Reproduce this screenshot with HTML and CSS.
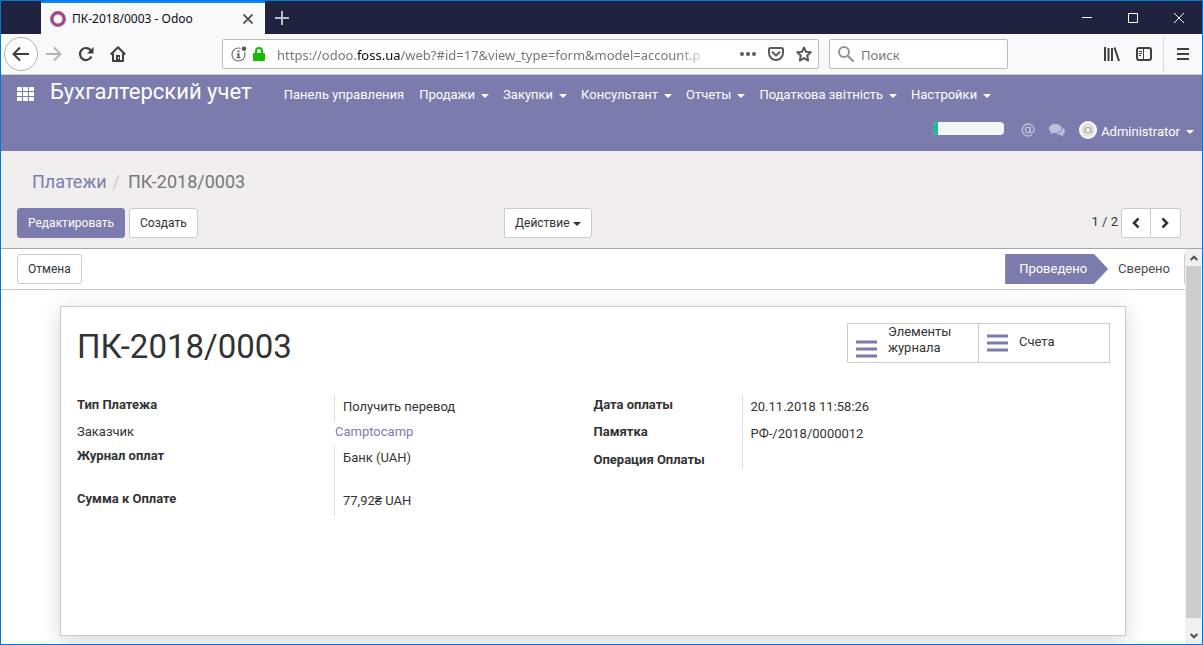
FILE: index.html
```html
<!DOCTYPE html>
<html lang="ru">
<head>
<meta charset="utf-8">
<title>ПК-2018/0003 - Odoo</title>
<link rel="stylesheet" href="styles.css">
</head>
<body>
<div class="window">
  <div class="titlebar">
    <div class="tab">
      <svg class="favicon" width="16" height="16" viewBox="0 0 16 16"><circle cx="8" cy="8" r="6.200" fill="none" stroke="#a24689" stroke-width="3.400"/></svg>
      <span class="tab-title">ПК-2018/0003 - Odoo</span>
      <button class="plain" aria-label="Закрыть вкладку"><svg width="10" height="10" viewBox="0 0 10 10"><path d="M.5.5l9 9M9.500.5l-9 9" stroke="#4a4a4f" stroke-width="1.700"/></svg></button>
    </div>
    <button class="plain new-tab" aria-label="Новая вкладка"><svg width="14" height="14" viewBox="0 0 14 14"><path d="M7 0v14M0 7h14" stroke="#bdbdc6" stroke-width="2"/></svg></button>
    <div class="window-controls">
      <button class="plain" aria-label="Свернуть"><svg width="10" height="10" viewBox="0 0 10 10"><path d="M0 4.500h10" stroke="#fff"/></svg></button>
      <button class="plain" aria-label="Развернуть"><svg width="10" height="10" viewBox="0 0 10 10"><path d="M.5.5h9v9h-9z" fill="none" stroke="#fff"/></svg></button>
      <button class="plain" aria-label="Закрыть"><svg width="10" height="10" viewBox="0 0 10 10"><path d="M0 0l10 10M10 0L0 10" stroke="#fff"/></svg></button>
    </div>
  </div>

  <div class="toolbar">
    <button class="plain back" aria-label="Назад"><svg width="18" height="16" viewBox="0 0 18 16"><path d="M17 8H2M8 1.500L1.500 8 8 14.500" fill="none" stroke="#3f3f42" stroke-width="2"/></svg></button>
    <button class="plain forward" aria-label="Вперёд"><svg width="16" height="16" viewBox="0 0 16 16"><path d="M0 8h14.500M8 1.500L14.500 8 8 14.500" fill="none" stroke="#b4b4b5" stroke-width="2"/></svg></button>
    <button class="plain reload" aria-label="Обновить"><svg width="16" height="16" viewBox="0 0 16 16"><path d="M13.500 10.500a6 6 0 1 1-.6-6" fill="none" stroke="#3f3f42" stroke-width="2.200"/><path d="M15.500 1v6.500H9z" fill="#3f3f42"/></svg></button>
    <button class="plain home" aria-label="Домой"><svg width="16" height="16" viewBox="0 0 16 16"><path d="M.8 8.500L8 1.300l7.200 7.200M3 7.500V15h10V7.500" fill="none" stroke="#3f3f42" stroke-width="2" stroke-linejoin="round"/><path d="M6 9h4v6H6z" fill="#3f3f42"/><path d="M8 11h1v2H8z" fill="#fff"/></svg></button>
    <div class="urlbar">
      <svg width="16" height="16" viewBox="0 0 16 16"><circle cx="7.500" cy="8.500" r="6.500" fill="none" stroke="#737373" stroke-width="1.200"/><circle cx="13" cy="2.800" r="3.400" fill="#fff"/><circle cx="13" cy="2.800" r="2.300" fill="#5a5a5a"/><path d="M6.500 4.500h2v1.500h-2zM6 7.200h2.500v4h1v1H5.500v-1h1V8.200H6z" fill="#5a5a5a"/></svg>
      <svg class="lock" width="12" height="14" viewBox="0 0 12 14"><path d="M3 7V4a3 3 0 0 1 6 0v3" fill="none" stroke="#12bc00" stroke-width="2"/><rect y="6" width="12" height="8" rx="1" fill="#12bc00"/></svg>
      <span class="url" role="textbox" aria-label="Адрес">https://odoo.<b>foss.ua</b>/web?#id=17&amp;view_type=form&amp;model=account.p</span>
      <button class="plain" aria-label="Действия"><svg width="16" height="16" viewBox="0 0 16 16"><g fill="#5a5a5c"><circle cx="2" cy="8" r="2"/><circle cx="8" cy="8" r="2"/><circle cx="14" cy="8" r="2"/></g></svg></button>
      <button class="plain" aria-label="Pocket"><svg width="16" height="16" viewBox="0 0 16 16"><path d="M2.500 2h11q1.500 0 1.500 1.500V7A7 7 0 0 1 1 7V3.500Q1 2 2.500 2z" fill="none" stroke="#5a5a5c" stroke-width="2"/><path d="M4.500 6.200L8 9.500l3.500-3.300" fill="none" stroke="#5a5a5c" stroke-width="2" stroke-linecap="round" stroke-linejoin="round"/></svg></button>
      <button class="plain" aria-label="Закладка"><svg width="16" height="16" viewBox="0 0 16 16"><path d="M8 1.500l2 4.200 4.800.6-3.600 3.200 1 5L8 12.200 3.800 14.500l1-5L1.200 6.300 6 5.700z" fill="none" stroke="#5a5a5c" stroke-width="2" stroke-linejoin="round"/></svg></button>
    </div>
    <label class="searchbar">
      <svg width="16" height="16" viewBox="0 0 16 16"><circle cx="6" cy="6" r="5" fill="none" stroke="#949494" stroke-width="2"/><path d="M9.500 9.500L15 15" stroke="#949494" stroke-width="2.200" stroke-linecap="round"/></svg>
      <input type="text" placeholder="Поиск" aria-label="Поиск">
    </label>
    <div class="toolbar-end">
      <button class="plain" aria-label="Библиотека"><svg width="16" height="16" viewBox="0 0 16 16"><path d="M1 1v14M4.500 2v13M8 2v13M10.500 1.500L15 15" fill="none" stroke="#3f3f42" stroke-width="2"/></svg></button>
      <button class="plain" aria-label="Боковая панель"><svg width="16" height="16" viewBox="0 0 16 16"><rect x="1" y="2" width="14" height="12" rx="2" fill="none" stroke="#3f3f42" stroke-width="2"/><path d="M7.500 2v12M3 5.500h3M3 7.500h3M3 9.500h2" stroke="#3f3f42"/></svg></button>
    </div>
    <button class="plain menu" aria-label="Меню"><svg width="12" height="12" viewBox="0 0 12 12"><path d="M0 1h12M0 6h12M0 11h12" stroke="#3f3f42" stroke-width="2"/></svg></button>
  </div>

  <header class="app-header">
    <nav class="main-nav">
      <button class="plain apps" aria-label="Приложения"><svg width="17" height="14" viewBox="0 0 17 14" fill="#fff"><path d="M0 0h5v4H0zM6 0h5v4H6zM12 0h5v4h-5zM0 5h5v4H0zM6 5h5v4H6zM12 5h5v4h-5zM0 10h5v4H0zM6 10h5v4H6zM12 10h5v4h-5z"/></svg></button>
      <a class="brand" href="#">Бухгалтерский учет</a>
      <div class="menu-items">
        <a href="#">Панель управления</a>
        <a class="caret" href="#">Продажи</a>
        <a class="caret" href="#">Закупки</a>
        <a class="caret" href="#">Консультант</a>
        <a class="caret" href="#">Отчеты</a>
        <a class="caret" href="#">Податкова звітність</a>
        <a class="caret" href="#">Настройки</a>
      </div>
    </nav>
    <div class="systray">
      <div class="progress"><div class="progress-value"></div></div>
      <a class="mention" href="#" aria-label="Упоминания"><svg width="14" height="14" viewBox="0 0 14 14" fill="none" stroke="#bfbfd9" stroke-width="1.300"><ellipse cx="6.800" cy="7" rx="2.400" ry="2.800"/><path d="M9.600 3.800L9 8.500q0 1.300 1.200 1.300 2.900-.3 2.900-3.300A5.900 5.900 0 0 0 7 1a6 6 0 1 0 3.800 10.800"/></svg></a>
      <a class="chat" href="#" aria-label="Сообщения"><svg width="16" height="13" viewBox="0 0 16 13" fill="#bfbfd9"><path d="M6.300 0C2.800 0 0 2 0 4.500 0 6 .9 7.300 2.400 8.100 2.200 9 1.700 9.600 1.200 10.200c1.500-.1 2.700-.7 3.500-1.400l1.600.1c3.500 0 6.300-2 6.300-4.400S9.800 0 6.300 0z"/><path d="M13.500 3.500c.6 3-2.300 6-6.500 6.300 1.200.9 2.800 1.200 4.500 1 .8.900 2 1.500 3.700 1.700-.6-.7-1-1.400-1.200-2.200C16.700 8.500 16.600 5 13.500 3.500z"/></svg></a>
      <a class="caret user" href="#"><svg width="18" height="18" viewBox="0 0 18 18"><circle cx="9" cy="9" r="9" fill="#fff"/><circle cx="9" cy="9" r="7" fill="#e3e3e3"/><path d="M5 6h8v6H5z" fill="#bdbdbd"/><circle cx="9" cy="9" r="2" fill="#eee"/></svg><span>Administrator</span></a>
    </div>
  </header>

  <section class="control-panel">
    <nav class="breadcrumb"><a href="#">Платежи</a><span class="slash">/</span><span>ПК-2018/0003</span></nav>
    <div class="actions">
      <div class="button-group">
        <button class="btn primary">Редактировать</button>
        <button class="btn">Создать</button>
      </div>
      <button class="btn caret action-menu">Действие</button>
      <div class="pager">
        <span>1 / 2</span>
        <div class="pager-buttons">
          <button class="btn" aria-label="Предыдущий"><svg width="8" height="12" viewBox="0 0 8 12"><path d="M6.500 1.500L2 6l4.500 4.500" fill="none" stroke="#333" stroke-width="2.500"/></svg></button>
          <button class="btn" aria-label="Следующий"><svg width="8" height="12" viewBox="0 0 8 12"><path d="M1.500 1.500L6 6l-4.500 4.500" fill="none" stroke="#333" stroke-width="2.500"/></svg></button>
        </div>
      </div>
    </div>
  </section>

  <div class="content">
    <main class="form-view">
      <div class="statusbar">
        <button class="btn">Отмена</button>
        <div class="stages">
          <button class="stage current">Проведено</button>
          <button class="stage">Сверено</button>
        </div>
      </div>
      <div class="sheet-area">
      <article class="sheet">
        <div class="sheet-head">
          <h1>ПК-2018/0003</h1>
          <div class="stat-buttons">
            <button class="stat tall"><svg width="21" height="18" viewBox="0 0 21 18"><path d="M0 2h21M0 9h21M0 16h21" stroke="#7c7bad" stroke-width="3"/></svg><span>Элементы журнала</span></button>
            <button class="stat"><svg width="21" height="18" viewBox="0 0 21 18"><path d="M0 2h21M0 9h21M0 16h21" stroke="#7c7bad" stroke-width="3"/></svg><span>Счета</span></button>
          </div>
        </div>
        <div class="groups">
          <dl class="group payment">
            <dt>Тип Платежа</dt><dd>Получить перевод</dd>
            <dt class="light">Заказчик</dt><dd class="flush"><a href="#">Camptocamp</a></dd>
            <dt>Журнал оплат</dt><dd class="spaced">Банк (UAH)</dd>
            <dt>Сумма к Оплате</dt><dd>77,92₴ UAH</dd>
          </dl>
          <dl class="group details">
            <dt>Дата оплаты</dt><dd>20.11.2018 11:58:26</dd>
            <dt>Памятка</dt><dd>РФ-/2018/0000012</dd>
            <dt>Операция Оплаты</dt><dd></dd>
          </dl>
        </div>
      </article>
      </div>
    </main>
    <div class="scrollbar" aria-hidden="true">
      <div class="scroll-arrow"><svg width="8" height="6" viewBox="0 0 8 6"><path d="M.7 5L4 1.700 7.300 5" fill="none" stroke="#505050" stroke-width="2"/></svg></div>
      <div class="thumb"></div>
      <div class="scroll-arrow"><svg width="8" height="6" viewBox="0 0 8 6"><path d="M.7 1L4 4.300 7.300 1" fill="none" stroke="#505050" stroke-width="2"/></svg></div>
    </div>
  </div>
</div>
</body>
</html>
```
FILE: styles.css
```css
* { box-sizing: border-box; }
body {
  margin: 0;
  font: 13px/18px Roboto, "Liberation Sans", sans-serif;
  color: #333;
}
a { color: inherit; text-decoration: none; }
button { font: inherit; color: inherit; margin: 0; }
svg { display: block; flex: none; }

.window {
  display: flex;
  flex-direction: column;
  height: 100vh;
  border: 1px solid #0078d7;
  background: #fff;
  overflow: hidden;
}
.plain {
  display: flex;
  align-items: center;
  justify-content: center;
  flex: none;
  padding: 0;
  border: 0;
  background: none;
}

/* Browser frame */
.titlebar {
  display: flex;
  flex: none;
  height: 33px;
  padding-left: 40px;
  background: #202340;
}
.tab {
  display: flex;
  align-items: center;
  width: 224px;
  padding: 0 12px 0 9px;
  border-top: 2px solid #0a84ff;
  background: #f9f9fa;
  font: 12px/16px "Noto Sans", sans-serif;
  color: #0c0c0d;
}
.tab-title { flex: 1; padding-left: 6px; white-space: nowrap; }
.new-tab { width: 34px; }
.window-controls { display: flex; margin-left: auto; }
.window-controls .plain { width: 46px; }

.toolbar {
  display: flex;
  align-items: center;
  flex: none;
  height: 41px;
  padding: 0 13px 0 3px;
  border-bottom: 1px solid #ccc;
  background: #f9f9fa;
}
.back {
  width: 34px;
  height: 34px;
  border: 1px solid #b1b1b1;
  border-radius: 50%;
  background: #fff;
}
.forward { margin-left: 8px; }
.reload, .home { margin-left: 16px; }
.urlbar, .searchbar {
  display: flex;
  align-items: center;
  height: 30px;
  border: 1px solid #bbb;
  border-radius: 2px;
  background: #fff;
  font: 13px/20px "Noto Sans", sans-serif;
  color: #777;
}
.urlbar {
  flex: 1;
  min-width: 0;
  gap: 12px;
  margin-left: 96px;
  padding: 0 6px 0 8px;
}
.lock { margin-left: -6px; }
.url {
  flex: 1;
  min-width: 0;
  margin-right: 18px;
  padding-top: 1px;
  overflow: hidden;
  white-space: nowrap;
  mask-image: linear-gradient(to left, transparent, #000 32px);
}
.url b { font-weight: 400; color: #0c0c0d; }
.searchbar { width: 179px; margin-left: 10px; padding: 0 8px; gap: 7px; }
.searchbar input {
  flex: 1;
  min-width: 0;
  padding: 1px 0 0;
  border: 0;
  outline: 0;
  background: none;
  font: inherit;
}
.searchbar input::placeholder { color: #777; }
.toolbar-end {
  display: flex;
  align-items: center;
  gap: 16px;
  height: 34px;
  margin-left: 96px;
  padding-right: 11px;
  border-right: 1px solid #d7d7db;
}
.menu { margin-left: 13px; }

/* Application header */
.app-header {
  flex: none;
  height: 76px;
  background: #7c7bad;
  color: #fff;
}
.main-nav {
  display: flex;
  align-items: center;
  gap: 16px;
  height: 38px;
  padding-left: 16px;
  white-space: nowrap;
}
.brand { margin-right: 16px; padding-bottom: 4px; font-size: 22px; line-height: 30px; }
.menu-items { display: flex; gap: 14px; padding-top: 2px; }
.menu-items :first-child { margin-right: 1px; }
.caret::after {
  content: "";
  display: inline-block;
  margin-left: 6px;
  border: 4px solid transparent;
  border-top-color: currentColor;
  border-bottom: 0;
  vertical-align: 1px;
}
.systray {
  display: flex;
  align-items: center;
  justify-content: flex-end;
  height: 34px;
  padding-right: 8px;
}
.progress {
  width: 71px;
  height: 13px;
  margin-bottom: 4px;
  border-radius: 4px;
  background: #f5f5f5;
  overflow: hidden;
}
.progress-value { width: 5px; height: 100%; background: #21b799; }
.mention { margin-left: 17px; }
.chat { margin-left: 14px; }
.user { display: flex; align-items: center; margin-left: 14px; }
.user svg { margin-right: 4px; }
.user span { padding-top: 3px; }
.user.caret::after { margin-top: 4px; }

/* Control panel */
.control-panel {
  flex: none;
  height: 98px;
  padding: 18px 21px 0 16px;
  border-bottom: 1px solid #a8a8a8;
  background: #f0eeee;
}
.breadcrumb {
  display: flex;
  gap: 6px;
  padding-left: 15px;
  font-size: 18px;
  line-height: 26px;
  color: #777;
}
.breadcrumb a { color: #7c7bad; }
.slash { color: #ccc; margin-right: 2px; }
.actions {
  display: grid;
  grid-template-columns: 487px 1fr auto;
  align-items: center;
  margin-top: 13px;
}
.button-group { display: flex; gap: 4px; }
.btn {
  height: 30px;
  padding: 0 10px;
  border: 1px solid #ccc;
  border-radius: 3px;
  background: #fff;
  font-size: 12px;
  line-height: 18px;
  white-space: nowrap;
}
.btn.primary { border-color: #7c7bad; background: #7c7bad; color: #fff; }
.action-menu { justify-self: start; border-radius: 0 3px 3px 0; }
.action-menu.caret::after { margin-left: 3px; }
.pager { display: flex; align-items: center; gap: 3px; }
.pager span { padding-bottom: 2px; }
.pager-buttons { display: flex; }
.pager-buttons .btn { display: flex; align-items: center; width: 30px; }
.pager-buttons .btn:first-child { border-radius: 3px 0 0 3px; }
.pager-buttons .btn:last-child { border-left: 0; border-radius: 0 3px 3px 0; }

/* Form */
.content { display: flex; flex: 1; min-height: 0; }
.form-view {
  display: flex;
  flex-direction: column;
  flex: 1;
  min-width: 0;
  overflow: hidden;
}
.statusbar {
  display: flex;
  align-items: center;
  justify-content: space-between;
  flex: none;
  height: 41px;
  padding-left: 16px;
  border-bottom: 1px solid #c8c8c8;
}
.stages { display: flex; border-right: 1px solid #ccc; }
.stage {
  height: 30px;
  padding: 0 14px 0 10px;
  border: 0;
  background: #fff;
  color: #4c4c4c;
}
.stage.current {
  padding: 0 21px 0 14px;
  background: #7c7bad;
  color: #fff;
  clip-path: polygon(0 0, calc(100% - 14px) 0, 100% 50%, calc(100% - 14px) 100%, 0 100%);
}
.sheet-area { display: flex; flex: 1; padding: 16px 59px 8px; overflow: hidden; }
.sheet {
  flex: 1;
  padding: 16px 15px 16px 16px;
  border: 1px solid #c8c8d3;
  background: #fff;
  box-shadow: 0 5px 20px rgba(0, 0, 0, .16);
}
.sheet-head {
  display: flex;
  justify-content: space-between;
  align-items: flex-start;
  margin-bottom: 24px;
}
h1 { margin: 0; font-size: 33px; line-height: 48px; font-weight: 400; }
.stat-buttons { display: flex; height: 40px; border: 1px solid #ccc; }
.stat {
  display: flex;
  align-items: center;
  gap: 11px;
  width: 130px;
  padding: 0 8px;
  border: 0;
  background: none;
  line-height: 16px;
  text-align: left;
}
.stat + .stat { width: 131px; border-left: 1px solid #ccc; }
.stat span { max-width: 70px; padding-bottom: 2px; }
.stat.tall { align-items: flex-start; }
.stat.tall svg { margin-top: 16px; }
.groups { display: grid; grid-template-columns: 1fr 1fr; }
.group { display: grid; align-content: start; margin: 0; }
.payment { grid-template-columns: 257px 1fr; }
.details { grid-template-columns: 148px 1fr; }
.group dt { padding-top: 1px; font-weight: 700; }
.group dt:last-of-type { padding-top: 2px; }
.payment dt:last-of-type { padding-top: 1px; }
.group dt.light { font-weight: 400; }
.group dd {
  min-height: 27px;
  margin: 0;
  padding: 3px 8px 6px;
  border-left: 1px solid #ddd;
}
.group dd.flush { min-height: 24px; padding: 1px 0; border-left-color: transparent; }
.group dd.spaced { min-height: 43px; }
.group dd:empty { min-height: 20px; padding: 0; }
.group dd a { color: #7c7bad; }

.scrollbar {
  display: flex;
  flex-direction: column;
  flex: none;
  width: 17px;
  padding: 0 1px;
  background: #f0f0f0;
}
.scroll-arrow {
  display: flex;
  align-items: center;
  justify-content: center;
  height: 17px;
}
.thumb { flex: 1; margin-bottom: 9px; background: #cdcdcd; }
```
